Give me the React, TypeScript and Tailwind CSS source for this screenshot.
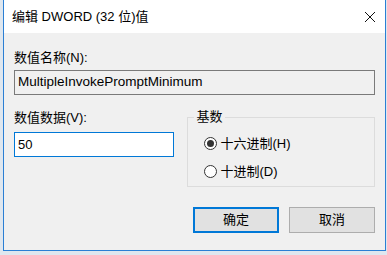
export default function App() {
  return (
    <div className="w-[387px] h-[255px] bg-[#dfe7ef] overflow-hidden font-['Liberation_Sans','Noto_Sans_CJK_SC',sans-serif] text-[13px] text-black">
      <div className="ml-[3px] w-[383px] h-[251px] flex flex-col border-x border-b border-[#2b7fd4] bg-[#f0f0f0]">
        {/* 标题栏 */}
        <div className="h-[33px] bg-white flex items-center justify-between pl-[8px] pr-[9px]">
          <span className="text-[13px]">编辑 DWORD (32 位)值</span>
          <svg width="12" height="12" viewBox="0 0 12 12" className="mt-[1px]">
            <path d="M1 1L11 11M11 1L1 11" stroke="#111" strokeWidth="1" />
          </svg>
        </div>

        <div className="flex-1 px-[10px]">
          <div className="mt-[16px] leading-[18px]">数值名称(N):</div>
          <div className="mt-[3px] w-[361px] h-[25px] border border-[#7a7a7a] bg-[#f0f0f0] flex items-center px-[3px] text-[13.5px]">
            MultipleInvokePromptMinimum
          </div>

          <div className="flex mt-[14px]">
            <div className="w-[161px]">
              <div className="leading-[18px]">数值数据(V):</div>
              <div className="mt-[5px] h-[25px] border border-[#0078d7] bg-white flex items-center px-[3px]">
                50
              </div>
            </div>

            <fieldset className="ml-[13px] w-[188px] h-[79px] border border-[#dcdcdc] px-[16px] -mt-[1px]">
              <legend className="px-[2px] ml-[-10px] leading-[18px]">基数</legend>
              <label className="flex items-center gap-[3px] mt-[8px]">
                <span className="w-[13px] h-[13px] rounded-full border border-[#333] bg-white flex items-center justify-center">
                  <span className="w-[7px] h-[7px] rounded-full bg-[#333]" />
                </span>
                十六进制(H)
              </label>
              <label className="flex items-center gap-[3px] mt-[8px]">
                <span className="w-[13px] h-[13px] rounded-full border border-[#333] bg-white" />
                十进制(D)
              </label>
            </fieldset>
          </div>

          <div className="flex justify-end gap-[10px] mt-[20px]">
            <button className="w-[86px] h-[26px] bg-[#e1e1e1] border-2 border-[#0078d7]">确定</button>
            <button className="w-[86px] h-[26px] bg-[#e1e1e1] border border-[#adadad]">取消</button>
          </div>
        </div>
      </div>
    </div>
  );
}
